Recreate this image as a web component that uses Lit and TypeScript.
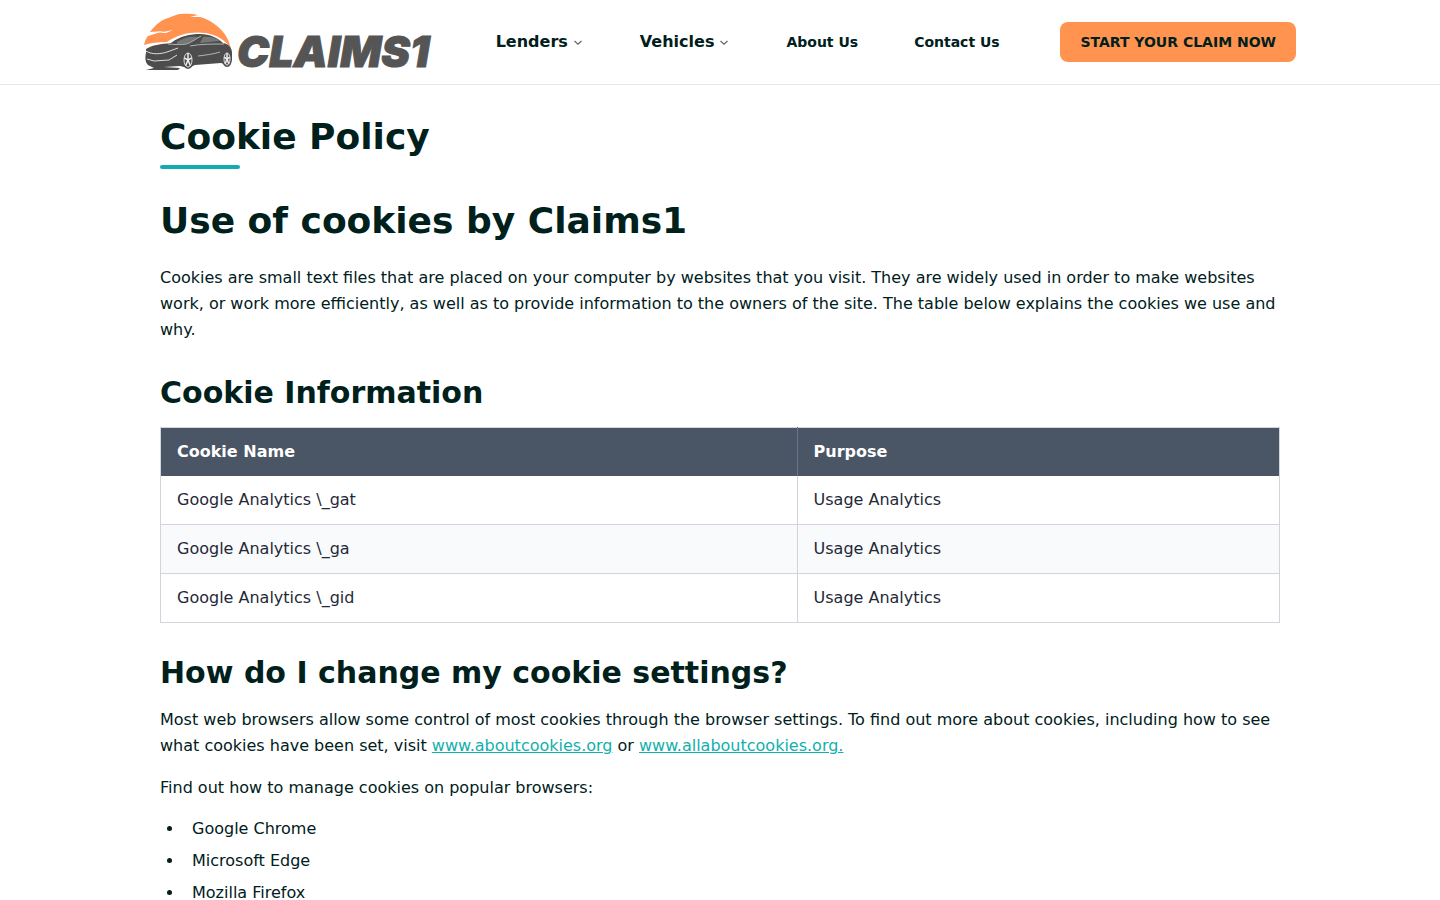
import { LitElement, html, css, svg } from "lit";
import { customElement } from "lit/decorators.js";

const cookies = [
  { name: "Google Analytics \\_gat", purpose: "Usage Analytics" },
  { name: "Google Analytics \\_ga", purpose: "Usage Analytics" },
  { name: "Google Analytics \\_gid", purpose: "Usage Analytics" },
];

const browsers = ["Google Chrome", "Microsoft Edge", "Mozilla Firefox"];

const spokes = (cx: number, cy: number, rx: number, ry: number) =>
  [0, 72, 144, 216, 288].map((a) => {
    const r = ((a - 90) * Math.PI) / 180;
    return svg`<line x1=${cx} y1=${cy} x2=${cx + rx * Math.cos(r)} y2=${cy + ry * Math.sin(r)} stroke="#eee" stroke-width="1.5" />`;
  });

@customElement("site-logo")
export class SiteLogo extends LitElement {
  static styles = css`
    :host {
      display: block;
    }
    .link {
      display: block;
    }
    .art {
      display: block;
      width: 291px;
      height: 56px;
      overflow: visible;
    }
    .word {
      font: italic 900 43px Inter, "Liberation Sans", sans-serif;
      fill: #555;
      stroke: #555;
      stroke-width: 1;
    }
  `;

  render() {
    return html`<a class="link" href="#" aria-label="Claims1 home">
      <svg class="art" viewBox="0 0 291 56" role="img" aria-label="Claims1">
        <path fill="#ff934f" d="M6 18 C11 11 17 6 24 4 L32 1 C39 -1 48 0 54 1 L46 3 L56 3 C70 7 84 18 87 35 C83 27 73 21 62 19 C48 17 34 20 23 28 C14 28 6 29 0 31 C1 27 2 24 4 22 L20 17 Z" />
        <path fill="#fff" d="M14 19 L29 16 L22 19 Z" />
        <path fill="#4d4d4d" d="M2 35 C8 31 17 30 27 29 C36 22 46 20 56 20 C66 20 74 24 79 29 C85 30 88 34 88 39 L88 46 L83 51 L77 49 L51 51 L44 54 L36 52 L20 53 L36 54 L34 56 L2 56 L10 54 L4 51 C1 48 1 43 2 39 Z" />
        <path fill="#777" d="M33 28 C39 24 46 22 54 23 C49 26 46 29 41 30 L33 30 Z M59 23 C66 22 72 24 76 27 L56 29 Z" />
        <path fill="none" stroke="#ddd" stroke-width="0.7" d="M24 30 C36 31 43 31 47 28 L57 22 M46 32 C56 30 68 30 80 30 M54 42 C62 41 70 40 76 38" />
        <path fill="none" stroke="#eee" stroke-width="0.9" d="M2 37 C8 41 17 40 23 38 L34 34 M3 45 L10 47 L25 46 L33 41" />
        <ellipse cx="44" cy="46" rx="6" ry="9" fill="#4d4d4d" />
        <ellipse cx="44" cy="46" rx="4" ry="7" fill="#4d4d4d" stroke="#eee" stroke-width="0.9" />
        ${spokes(44, 46, 4, 7)}
        <ellipse cx="83" cy="45" rx="5" ry="8" fill="#4d4d4d" />
        <ellipse cx="83" cy="45" rx="3" ry="6" fill="#4d4d4d" stroke="#eee" stroke-width="0.9" />
        ${spokes(83, 45, 3, 6)}
        <text class="word" x="93" y="53">CLAIMS1</text>
      </svg>
    </a>`;
  }
}

@customElement("site-header")
export class SiteHeader extends LitElement {
  static styles = css`
    :host {
      display: block;
      border-bottom: 1px solid #e5e7eb;
      background: #fff;
    }
    .bar {
      box-sizing: border-box;
      max-width: 1152px;
      margin: 0 auto;
      padding: 14px 0;
      display: flex;
      align-items: center;
      justify-content: space-between;
    }
    .nav {
      display: flex;
      align-items: center;
      gap: 56px;
    }
    .menu {
      display: flex;
      align-items: center;
      gap: 4px;
      padding: 0;
      border: 0;
      background: none;
      color: inherit;
      font: inherit;
      font-weight: 700;
      line-height: 24px;
      cursor: pointer;
    }
    .chevron {
      width: 12px;
      height: 12px;
    }
    .item {
      color: inherit;
      font-size: 14px;
      font-weight: 700;
      line-height: 24px;
      text-decoration: none;
    }
    .cta {
      padding: 0 20px;
      border-radius: 8px;
      background: #ff934f;
      color: inherit;
      font-size: 14px;
      font-weight: 700;
      line-height: 40px;
      text-decoration: none;
    }
  `;

  private menu(label: string) {
    return html`<button class="menu" type="button" aria-haspopup="true">
      ${label}
      <svg class="chevron" viewBox="0 0 12 12" aria-hidden="true">
        <path d="M2.5 5 L6 8.2 L9.5 5" fill="none" stroke="#5b6470" stroke-width="1.2" />
      </svg>
    </button>`;
  }

  render() {
    return html`<header class="bar">
      <site-logo></site-logo>
      <nav class="nav" aria-label="Main">
        ${this.menu("Lenders")} ${this.menu("Vehicles")}
        <a class="item" href="#">About Us</a>
        <a class="item" href="#">Contact Us</a>
      </nav>
      <a class="cta" href="#">START YOUR CLAIM NOW</a>
    </header>`;
  }
}

@customElement("app-root")
export class AppRoot extends LitElement {
  static styles = css`
    :host {
      display: block;
      background: #fff;
      color: #00201c;
      font-family: "DejaVu Sans", sans-serif;
      font-size: 16px;
      line-height: 26px;
    }
    .page {
      box-sizing: border-box;
      max-width: 1152px;
      margin: 0 auto;
      padding: 32px 16px 0;
    }
    .title {
      margin: 0;
      font-size: 36px;
      font-weight: 700;
      line-height: 40px;
    }
    .page-title::after {
      content: "";
      display: block;
      width: 80px;
      height: 4px;
      margin: 8px 0 32px;
      border-radius: 2px;
      background: #12acb0;
    }
    .intro {
      margin: 24px 0 32px;
    }
    .section {
      margin: 32px 0 16px;
      font-size: 30px;
      font-weight: 700;
      line-height: 36px;
    }
    .text {
      margin: 16px 0;
    }
    .table {
      width: 100%;
      border-collapse: collapse;
      border: 1px solid #d1d5db;
      color: #1f2937;
      line-height: 24px;
      text-align: left;
    }
    .thead {
      background: #4a5565;
      color: #fff;
    }
    .head {
      padding: 12px 16px;
      font-weight: 700;
    }
    .head + .head {
      border-left: 1px solid #64748b;
    }
    .cell {
      padding: 12px 16px;
      border: 1px solid #d1d5db;
    }
    .row:first-child .cell {
      border-top: 0;
    }
    .row:nth-child(even) {
      background: #f9fafb;
    }
    .link {
      color: #12b0ac;
      text-decoration: underline;
    }
    .list {
      display: grid;
      gap: 8px;
      margin: 16px 0 0;
      padding-left: 24px;
      line-height: 24px;
    }
    .browser {
      padding-left: 8px;
    }
  `;

  render() {
    return html`
      <site-header></site-header>
      <main class="page">
        <h1 class="title page-title">Cookie Policy</h1>
        <h1 class="title">Use of cookies by Claims1</h1>
        <p class="intro">
          Cookies are small text files that are placed on your computer by websites that you visit. They are widely used
          in order to make websites work, or work more efficiently, as well as to provide information to the owners of
          the site. The table below explains the cookies we use and why.
        </p>
        <h2 class="section">Cookie Information</h2>
        <table class="table">
          <thead class="thead">
            <tr>
              <th class="head" scope="col">Cookie Name</th>
              <th class="head" scope="col">Purpose</th>
            </tr>
          </thead>
          <tbody>
            ${cookies.map(
              (c) => html`<tr class="row">
                <td class="cell">${c.name}</td>
                <td class="cell">${c.purpose}</td>
              </tr>`
            )}
          </tbody>
        </table>
        <h2 class="section">How do I change my cookie settings?</h2>
        <p class="text">
          Most web browsers allow some control of most cookies through the browser settings. To find out more about
          cookies, including how to see what cookies have been set, visit
          <a class="link" href="#">www.aboutcookies.org</a> or
          <a class="link" href="#">www.allaboutcookies.org.</a>
        </p>
        <p class="text">Find out how to manage cookies on popular browsers:</p>
        <ul class="list">
          ${browsers.map((b) => html`<li class="browser">${b}</li>`)}
        </ul>
      </main>
    `;
  }
}
